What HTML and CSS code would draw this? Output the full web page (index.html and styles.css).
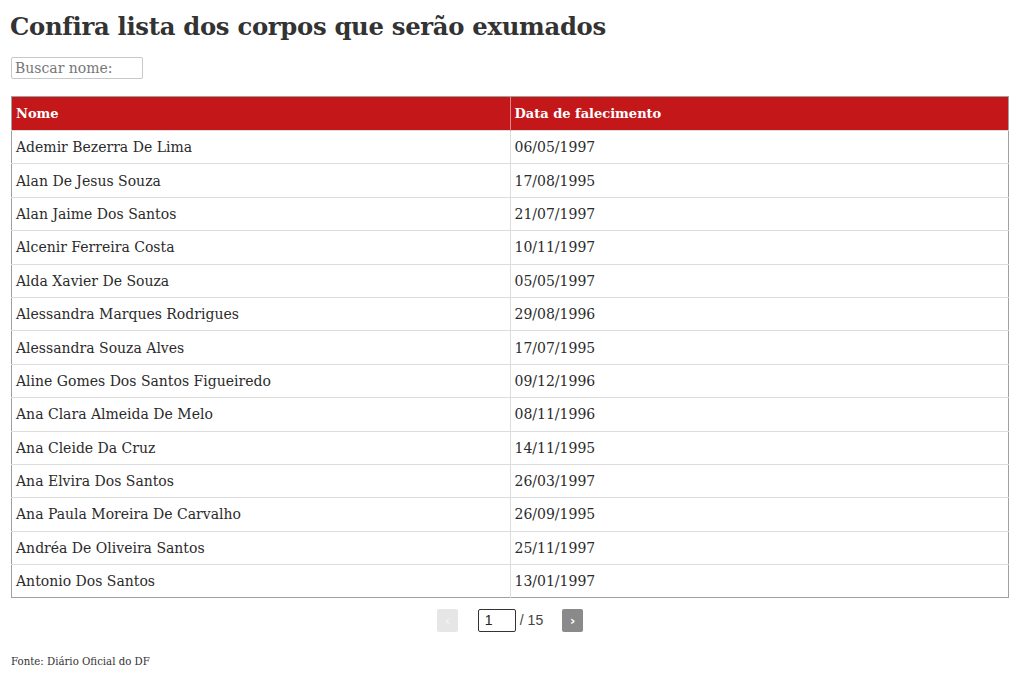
FILE: index.html
```html
<!DOCTYPE html>
<html lang="pt-BR">
<head>
<meta charset="utf-8">
<title>Confira lista dos corpos que serão exumados</title>
<link rel="stylesheet" href="styles.css">
</head>
<body>
<div class="page">
  <h1 class="title">Confira lista dos corpos que serão exumados</h1>
  <div class="search"><input class="search-input" type="text" placeholder="Buscar nome:"></div>
  <table class="list">
    <thead>
      <tr><th>Nome</th><th>Data de falecimento</th></tr>
    </thead>
    <tbody>
      <tr><td>Ademir Bezerra De Lima</td><td>06/05/1997</td></tr>
      <tr><td>Alan De Jesus Souza</td><td>17/08/1995</td></tr>
      <tr><td>Alan Jaime Dos Santos</td><td>21/07/1997</td></tr>
      <tr><td>Alcenir Ferreira Costa</td><td>10/11/1997</td></tr>
      <tr><td>Alda Xavier De Souza</td><td>05/05/1997</td></tr>
      <tr><td>Alessandra Marques Rodrigues</td><td>29/08/1996</td></tr>
      <tr><td>Alessandra Souza Alves</td><td>17/07/1995</td></tr>
      <tr><td>Aline Gomes Dos Santos Figueiredo</td><td>09/12/1996</td></tr>
      <tr><td>Ana Clara Almeida De Melo</td><td>08/11/1996</td></tr>
      <tr><td>Ana Cleide Da Cruz</td><td>14/11/1995</td></tr>
      <tr><td>Ana Elvira Dos Santos</td><td>26/03/1997</td></tr>
      <tr><td>Ana Paula Moreira De Carvalho</td><td>26/09/1995</td></tr>
      <tr><td>Andréa De Oliveira Santos</td><td>25/11/1997</td></tr>
      <tr><td>Antonio Dos Santos</td><td>13/01/1997</td></tr>
    </tbody>
  </table>
  <div class="pager">
    <button class="pager-btn pager-prev" type="button">‹</button>
    <input class="pager-input" type="text" value="1">
    <span class="pager-total">/ 15</span>
    <button class="pager-btn pager-next" type="button">›</button>
  </div>
  <p class="source">Fonte: Diário Oficial do DF</p>
</div>
</body>
</html>
```
FILE: styles.css
```css
html, body {
  margin: 0;
  padding: 0;
  background: #ffffff;
}
.page {
  padding: 0 11px;
  font-family: "DejaVu Serif", "Liberation Serif", serif;
  color: #333333;
}
.title {
  margin: 0;
  padding-top: 11px;
  margin-left: -1px;
  font-size: 24.3px;
  line-height: 32px;
  font-weight: bold;
  color: #333333;
  letter-spacing: -0.3px;
}
.search {
  margin-top: 14px;
  height: 22px;
}
.search-input {
  box-sizing: border-box;
  width: 132px;
  height: 22px;
  margin: 0;
  padding: 0 3px;
  border: 1px solid #c8c8c8;
  border-radius: 2px;
  font-family: inherit;
  font-size: 14px;
  color: #333;
}
.search-input::placeholder {
  color: #777777;
}
.list {
  margin-top: 17px;
  width: 998px;
  border-collapse: collapse;
  border: 1px solid #a0a0a0;
  table-layout: fixed;
  font-size: 14px;
}
.list th {
  background: #c4171a;
  color: #ffffff;
  text-align: left;
  font-weight: bold;
  font-size: 13px;
  height: 34px;
  padding: 0 4px;
  box-sizing: border-box;
  border-left: 1px solid #e08a8c;
}
.list th:first-child {
  border-left: none;
}
.list td {
  height: 33.4px;
  padding: 0 4px;
  box-sizing: border-box;
  border-top: 1px solid #dddddd;
  border-left: 1px solid #dddddd;
  color: #2b2b2b;
}
.list td:first-child {
  border-left: none;
}
.pager {
  display: flex;
  justify-content: center;
  align-items: center;
  margin-top: 10px;
  height: 24px;
}
.pager-btn {
  width: 21px;
  height: 23px;
  padding: 0;
  border: none;
  border-radius: 2px;
  font-family: "DejaVu Sans", sans-serif;
  font-size: 13px;
  font-weight: bold;
  line-height: 23px;
}
.pager-prev {
  background: #e6e6e6;
  color: #f4f4f4;
  margin-right: 20px;
}
.pager-next {
  background: #8a8a8a;
  color: #ffffff;
  margin-left: 19px;
}
.pager-input {
  box-sizing: border-box;
  width: 38px;
  height: 23px;
  margin: 0 4px 0 0;
  padding: 0 6px;
  border: 1px solid #333;
  border-radius: 2px;
  font-family: "Liberation Sans", sans-serif;
  font-size: 14px;
  color: #222;
}
.pager-total {
  font-family: "Liberation Sans", sans-serif;
  font-size: 14px;
  color: #444;
}
.source {
  margin: 24px 0 0;
  font-size: 10.2px;
  color: #333;
}
```
